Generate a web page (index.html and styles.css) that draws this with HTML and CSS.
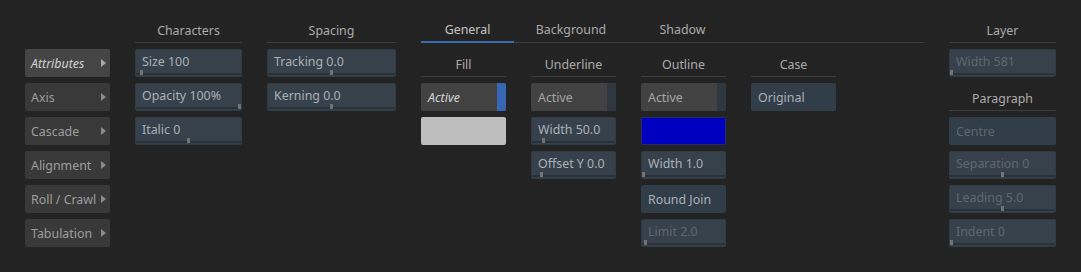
FILE: index.html
```html
<!DOCTYPE html>
<html lang="en">
<head>
  <meta charset="UTF-8">
  <title>Text Properties</title>
  <link rel="stylesheet" href="styles.css">
</head>
<body>
  <div class="panel">

    <nav class="menu">
      <div class="menu-btn active">Attributes</div>
      <div class="menu-btn">Axis</div>
      <div class="menu-btn">Cascade</div>
      <div class="menu-btn">Alignment</div>
      <div class="menu-btn">Roll / Crawl</div>
      <div class="menu-btn">Tabulation</div>
    </nav>

    <section class="group narrow">
      <div class="head">Characters</div>
      <div class="slider"><span class="label">Size 100</span><div class="track"><i class="knob" style="--p:0.04"></i></div></div>
      <div class="slider"><span class="label">Opacity 100%</span><div class="track"><i class="knob" style="--p:1"></i></div></div>
      <div class="slider"><span class="label">Italic 0</span><div class="track"><i class="knob" style="--p:0.5"></i></div></div>
    </section>

    <section class="group wide">
      <div class="head">Spacing</div>
      <div class="slider"><span class="label">Tracking 0.0</span><div class="track"><i class="knob" style="--p:0.5"></i></div></div>
      <div class="slider"><span class="label">Kerning 0.0</span><div class="track"><i class="knob" style="--p:0.5"></i></div></div>
    </section>

    <section class="tabs">
      <div class="tabbar">
        <div class="tab general on">General</div>
        <div class="tab background">Background</div>
        <div class="tab shadow">Shadow</div>
      </div>
      <div class="tabbody">
        <div class="group box">
          <div class="head">Fill</div>
          <div class="toggle on"><span class="label">Active</span><i class="flag"></i></div>
          <div class="swatch grey"></div>
        </div>
        <div class="group box">
          <div class="head">Underline</div>
          <div class="toggle"><span class="label">Active</span><i class="flag"></i></div>
          <div class="slider"><span class="label">Width 50.0</span><div class="track"><i class="knob" style="--p:0.12"></i></div></div>
          <div class="slider"><span class="label">Offset Y 0.0</span><div class="track"><i class="knob" style="--p:0.1"></i></div></div>
        </div>
        <div class="group box">
          <div class="head">Outline</div>
          <div class="toggle"><span class="label">Active</span><i class="flag"></i></div>
          <div class="swatch blue"></div>
          <div class="slider"><span class="label">Width 1.0</span><div class="track"><i class="knob" style="--p:0"></i></div></div>
          <div class="choice"><span class="label">Round Join</span></div>
          <div class="slider off"><span class="label">Limit 2.0</span><div class="track"><i class="knob" style="--p:0.03"></i></div></div>
        </div>
        <div class="group box">
          <div class="head">Case</div>
          <div class="choice"><span class="label">Original</span></div>
        </div>
      </div>
    </section>

    <section class="group narrow">
      <div class="head">Layer</div>
      <div class="slider off"><span class="label">Width 581</span><div class="track"><i class="knob" style="--p:0"></i></div></div>
      <div class="head sub">Paragraph</div>
      <div class="choice off"><span class="label">Centre</span></div>
      <div class="slider off"><span class="label">Separation 0</span><div class="track"><i class="knob" style="--p:0.5"></i></div></div>
      <div class="slider off"><span class="label">Leading 5.0</span><div class="track"><i class="knob" style="--p:0.5"></i></div></div>
      <div class="slider off"><span class="label">Indent 0</span><div class="track"><i class="knob" style="--p:0"></i></div></div>
    </section>

  </div>
</body>
</html>
```

FILE: styles.css
```css
html, body {
  margin: 0;
  height: 100%;
  background: #232323;
}

body {
  font-family: 'Noto Sans', sans-serif;
  font-size: 12.4px;
  color: #a9a9a9;
}

.panel {
  display: flex;
  gap: 25px;
  padding: 19px 25px 0 25px;
}

/* left menu */
.menu {
  width: 85px;
  padding-top: 30px;
  display: flex;
  flex-direction: column;
  gap: 6px;
}

.menu-btn {
  position: relative;
  height: 28px;
  line-height: 30px;
  padding-left: 6px;
  background: #393939;
  border-radius: 2px;
  color: #9e9e9e;
}

.menu-btn::after {
  content: "";
  position: absolute;
  right: 4px;
  top: 10px;
  border-left: 5px solid #8a8a8a;
  border-top: 4px solid transparent;
  border-bottom: 4px solid transparent;
}

.menu-btn.active {
  background: #454545;
  color: #d2d2d2;
  font-style: italic;
}

.menu-btn.active::after {
  border-left-color: #a8a8a8;
}

/* groups */
.group {
  display: flex;
  flex-direction: column;
  gap: 6px;
}

.narrow { width: 107px; }
.wide { width: 129px; }
.box { width: 85px; }

.head {
  height: 23px;
  line-height: 23px;
  text-align: center;
  border-bottom: 1px solid #3d3d3d;
  color: #ababab;
}

.head.sub {
  margin-top: 4px;
}

/* widgets */
.slider, .toggle, .choice, .swatch {
  height: 28px;
  box-sizing: border-box;
  border-radius: 2px;
}

.label {
  padding-left: 7px;
  white-space: nowrap;
  color: #aab0b6;
}

.slider {
  display: flex;
  flex-direction: column;
  background: #36414b;
  border: 1px solid #323b44;
}

.slider .label {
  flex: 1;
  line-height: 23px;
  padding-left: 6px;
}

.track {
  position: relative;
  height: 3px;
  margin-bottom: 1px;
  background: #29313a;
}

.knob {
  position: absolute;
  bottom: 0;
  left: calc((100% - 3px) * var(--p));
  width: 3px;
  height: 5px;
  background: #727272;
}

.off .label {
  color: #5f676e;
}

.toggle {
  display: flex;
  align-items: center;
  background: #424242;
}

.toggle .label {
  flex: 1;
  padding-top: 1px;
  color: #a6a6a6;
}

.flag {
  width: 9px;
  height: 100%;
  background: #2f3741;
  border-radius: 0 2px 2px 0;
}

.toggle.on .label {
  font-style: italic;
  color: #d4d4d4;
}

.toggle.on .flag {
  background: #3767b2;
}

.choice {
  display: flex;
  align-items: center;
  background: #323d4a;
}

.choice .label {
  padding-top: 1px;
}

.swatch.grey { background: #bdbdbd; }
.swatch.blue { background: #0000c0; border: 1px solid #2a2a6a; }

/* tabs */
.tabs {
  width: 503px;
}

.tabbar {
  display: flex;
  height: 23px;
  border-bottom: 1px solid #3d3d3d;
}

.tab {
  height: 21px;
  line-height: 21px;
  text-align: center;
  color: #a9a9a9;
}

.tab.general { width: 93px; }
.tab.background { width: 114px; }
.tab.shadow { width: 109px; }

.tab.on {
  height: 22px;
  color: #c4c4c4;
  border-bottom: 2px solid #3a6cb6;
}

.tabbody {
  display: flex;
  gap: 25px;
  padding-top: 10px;
}
```
